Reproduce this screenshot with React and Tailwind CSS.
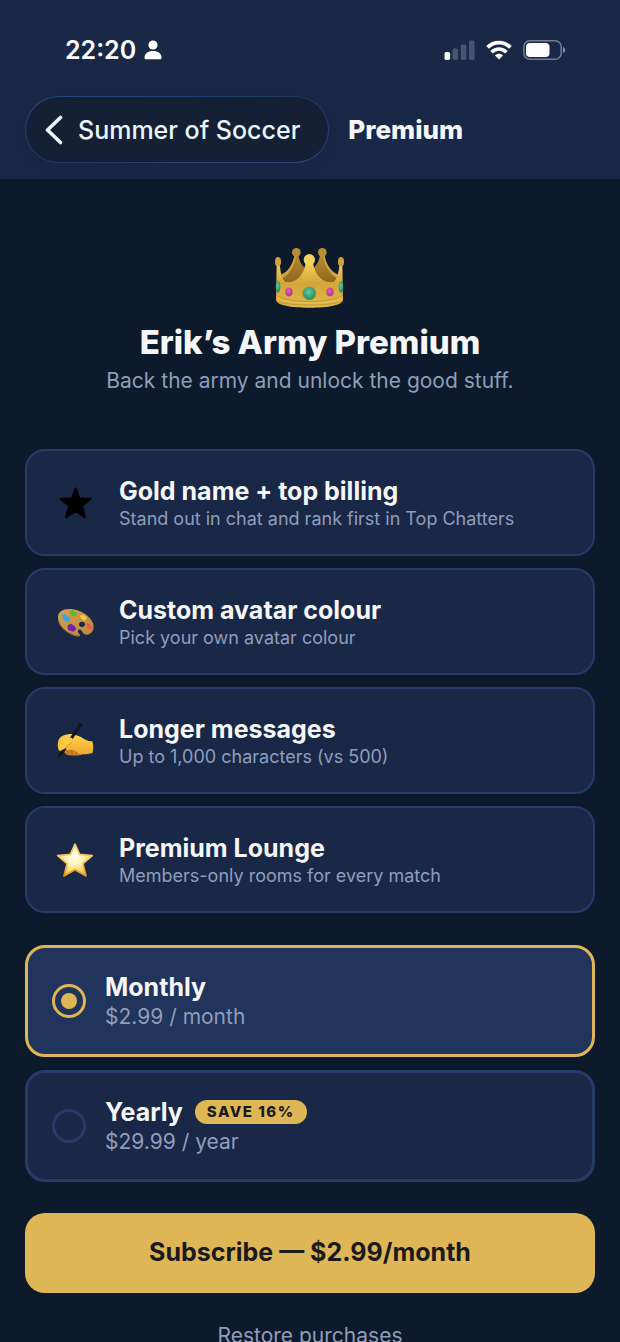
import React, { useState } from 'react';

function CrownIcon() {
  return (
    <svg viewBox="45 35 210 186" className="w-[70px] h-[62px]" aria-hidden="true">
      <defs>
        <linearGradient id="crownFront" x1="0" y1="0" x2="0" y2="1">
          <stop offset="0" stopColor="#f3cf58" />
          <stop offset="0.45" stopColor="#d3a63a" />
          <stop offset="1" stopColor="#dfb94c" />
        </linearGradient>
        <linearGradient id="crownBack" x1="0" y1="0" x2="0" y2="1">
          <stop offset="0" stopColor="#b98b32" />
          <stop offset="1" stopColor="#8b601d" />
        </linearGradient>
        <radialGradient id="crownGreen" cx="0.45" cy="0.4" r="0.6">
          <stop offset="0" stopColor="#63cfa0" />
          <stop offset="1" stopColor="#23835f" />
        </radialGradient>
        <radialGradient id="crownPink" cx="0.45" cy="0.4" r="0.6">
          <stop offset="0" stopColor="#e75fc8" />
          <stop offset="1" stopColor="#a92c92" />
        </radialGradient>
      </defs>
      <path d="M62 118 C84 112 97 88 104 60 L115 60 C119 80 125 90 136 98 L160 98 C170 90 176 80 180 60 L193 60 C198 88 214 112 235 118 L222 152 L75 152 Z" fill="url(#crownBack)" />
      <path d="M63 118 C84 112 98 88 104 60 L109 60 C104 92 88 118 68 128 Z M235 118 C214 112 199 88 193 60 L188 60 C194 92 210 118 230 128 Z" fill="#cfa43e" />
      <circle cx="109" cy="51" r="13" fill="#b98d35" />
      <circle cx="187" cy="51" r="13" fill="#b98d35" />
      <path d="M50 86 L59 86 C62 110 65 134 78 141 C104 148 132 122 137 84 L159 84 C164 122 193 148 219 141 C232 134 236 110 239 86 L247 86 L249 194 C246 210 205 217 149 217 C92 217 51 210 48 194 Z" fill="url(#crownFront)" />
      <path d="M78 141 C104 148 132 122 137 88 M219 141 C193 148 164 122 159 88" fill="none" stroke="#e6c055" strokeWidth="2" />
      <path d="M49 179 C70 205 228 205 248 179" fill="none" stroke="#b58430" strokeWidth="2" />
      <path d="M50 184 C71 209 227 209 247 184" fill="none" stroke="#ecce66" strokeWidth="2" />
      <path d="M49 196 C65 213 231 213 248 196" fill="none" stroke="#b88a31" strokeWidth="2" />
      <ellipse cx="54" cy="79" rx="9" ry="14" fill="#cfa13d" />
      <ellipse cx="243" cy="79" rx="9" ry="14" fill="#cfa13d" />
      <circle cx="148" cy="73" r="17" fill="#f4d35c" />
      <ellipse cx="54" cy="154" rx="7" ry="18" fill="url(#crownGreen)" />
      <ellipse cx="243" cy="154" rx="7" ry="18" fill="url(#crownGreen)" />
      <ellipse cx="87" cy="170" rx="11" ry="13" fill="url(#crownPink)" stroke="#c5912e" strokeWidth="2" />
      <ellipse cx="210" cy="170" rx="11" ry="13" fill="url(#crownPink)" stroke="#c5912e" strokeWidth="2" />
      <circle cx="148" cy="174" r="20" fill="url(#crownGreen)" stroke="#c5912e" strokeWidth="2" />
    </svg>
  );
}

function BlackStarIcon() {
  return (
    <svg viewBox="93 123 144 126" className="w-12 h-[42px]" aria-hidden="true">
      <path
        d="M167 143 L178 173 L211 174 L186 194 L194 228 L167 209 L139 228 L148 194 L122 174 L156 173 Z"
        fill="#000"
        stroke="#000"
        strokeWidth="7"
        strokeLinejoin="round"
      />
    </svg>
  );
}

function PaletteIcon() {
  return (
    <svg viewBox="33 33 144 126" className="w-12 h-[42px]" aria-hidden="true">
      <defs>
        <linearGradient id="wood" x1="0" y1="0" x2="1" y2="1">
          <stop offset="0" stopColor="#d6a04b" />
          <stop offset="1" stopColor="#bd8740" />
        </linearGradient>
      </defs>
      <path
        fillRule="evenodd"
        d="M54 84 C52 64 72 55 93 57 C122 60 153 77 160 103 C163 120 156 131 144 134 C136 136 129 130 125 123 C121 116 111 118 114 126 C116 132 124 135 119 138 C110 142 88 133 73 119 C61 108 55 97 54 84 Z M126 95 a9 8 0 1 0 0.1 0 Z"
        fill="url(#wood)"
      />
      <path d="M56 96 C62 116 95 139 119 138" fill="none" stroke="#8d5f2a" strokeWidth="3" />
      <path d="M89 66 L96 60 L102 66 L110 69 L106 77 L96 77 Z" fill="#57b934" stroke="#57b934" strokeWidth="3" strokeLinejoin="round" />
      <path d="M66 75 L74 73 L81 81 L90 84 L85 93 L73 92 Z" fill="#3da4de" stroke="#3da4de" strokeWidth="3" strokeLinejoin="round" />
      <path d="M120 77 L130 76 L139 83 L136 91 L126 87 Z" fill="#f4cf3e" stroke="#f4cf3e" strokeWidth="2" strokeLinejoin="round" />
      <path d="M140 100 L149 103 L158 115 L150 119 L144 112 Z" fill="#e65e4c" stroke="#e65e4c" strokeWidth="2" strokeLinejoin="round" />
      <path d="M84 107 L92 103 L101 107 L108 117 L100 124 L85 119 Z" fill="#7421ab" stroke="#7421ab" strokeWidth="3" strokeLinejoin="round" />
    </svg>
  );
}

function WritingHandIcon() {
  return (
    <svg viewBox="33 30 144 126" className="w-12 h-[42px]" aria-hidden="true">
      <defs>
        <linearGradient id="skin" x1="0" y1="0" x2="0" y2="1">
          <stop offset="0" stopColor="#ffd34b" />
          <stop offset="1" stopColor="#f0a930" />
        </linearGradient>
      </defs>
      <path d="M68 112 C70 128 78 137 92 136 C108 138 126 136 134 129 L120 106 Z" fill="#cf8127" />
      <path d="M80 120 L84 133 M94 122 L98 134 M108 124 L111 134" fill="none" stroke="#a55f19" strokeWidth="2" strokeLinecap="round" />
      <path d="M55 118 C52 104 53 90 60 83 C68 75 84 71 98 72 C106 76 116 76 124 82 C134 89 145 95 157 94 C161 106 161 120 157 130 C143 132 128 135 116 131 C108 122 98 118 86 120 C74 121 66 120 60 124 Z" fill="url(#skin)" />
      <path d="M121 44 L92 88" stroke="#11151c" strokeWidth="9" strokeLinecap="round" />
      <path d="M117 42 L126 48" stroke="#11151c" strokeWidth="5" strokeLinecap="round" />
      <path d="M76 114 L66 128" stroke="#11151c" strokeWidth="9" />
      <path d="M61 124 L71 131 L52 144 Z" fill="#11151c" />
      <path d="M56 118 C58 102 68 88 84 83 C96 80 102 88 97 96 C90 104 80 106 74 116 C70 119 62 121 56 118 Z" fill="#fdcb43" />
      <path d="M97 96 C90 104 80 106 74 116" fill="none" stroke="#d98c25" strokeWidth="3" strokeLinecap="round" />
    </svg>
  );
}

function GoldStarIcon() {
  return (
    <svg viewBox="33 27 144 126" className="w-12 h-[42px]" aria-hidden="true">
      <defs>
        <linearGradient id="starEdge" x1="0" y1="0" x2="0" y2="1">
          <stop offset="0" stopColor="#f2c66b" />
          <stop offset="0.5" stopColor="#f3c453" />
          <stop offset="1" stopColor="#dc9422" />
        </linearGradient>
        <radialGradient id="starFill" cx="0.48" cy="0.38" r="0.62">
          <stop offset="0" stopColor="#fffef0" />
          <stop offset="0.4" stopColor="#fff5bd" />
          <stop offset="1" stopColor="#f5c13e" />
        </radialGradient>
      </defs>
      <path
        d="M105 42 L119 73 L157 77 L129 101 L138 138 L105 119 L72 138 L81 101 L53 77 L91 73 Z"
        fill="url(#starFill)"
        stroke="url(#starEdge)"
        strokeWidth="5"
        strokeLinejoin="round"
      />
    </svg>
  );
}

const perks = [
  { icon: <BlackStarIcon />, title: 'Gold name + top billing', text: 'Stand out in chat and rank first in Top Chatters' },
  { icon: <PaletteIcon />, title: 'Custom avatar colour', text: 'Pick your own avatar colour' },
  { icon: <WritingHandIcon />, title: 'Longer messages', text: 'Up to 1,000 characters (vs 500)' },
  { icon: <GoldStarIcon />, title: 'Premium Lounge', text: 'Members-only rooms for every match' },
];

const plans = [
  { id: 'monthly', name: 'Monthly', price: '$2.99', unit: 'month' },
  { id: 'yearly', name: 'Yearly', price: '$29.99', unit: 'year', badge: 'SAVE 16%' },
];

function StatusBar() {
  return (
    <div className="flex items-center justify-between pl-[65px] pr-[54px] text-white">
      <div className="flex items-center gap-2">
        <span className="text-[25px] leading-8 font-semibold">22:20</span>
        <svg viewBox="0 0 18 20" className="w-[18px] h-5" fill="currentColor" aria-hidden="true">
          <circle cx="9" cy="5" r="4.6" />
          <path d="M0.5 17.5 C0.5 13.5 4 11 9 11 C14 11 17.5 13.5 17.5 17.5 C17.5 18.8 17 19.3 16 19.3 H2 C1 19.3 0.5 18.8 0.5 17.5 Z" />
        </svg>
      </div>
      <div className="flex items-center gap-[11px]">
        <svg viewBox="0 0 31 20" className="w-[31px] h-5" fill="currentColor" aria-hidden="true">
          <rect x="0.5" y="12" width="5.6" height="8" rx="1.8" />
          <g opacity="0.2">
            <rect x="8.5" y="8.5" width="5.6" height="11.5" rx="1.8" />
            <rect x="16.8" y="4.5" width="5.6" height="15.5" rx="1.8" />
            <rect x="25" y="0.5" width="5.6" height="19.5" rx="1.8" />
          </g>
        </svg>
        <svg viewBox="0 0 26 20" className="w-[26px] h-5" fill="none" stroke="currentColor" aria-hidden="true">
          <path d="M1.6 7.4 C8 0.9 18 0.9 24.4 7.4" strokeWidth="3.8" />
          <path d="M5.6 12.2 C10 8 16 8 20.4 12.2" strokeWidth="3.6" />
          <path d="M9 15.4 C11.2 13.2 14.8 13.2 17 15.4 L13 19.6 Z" fill="currentColor" stroke="none" />
        </svg>
        <svg viewBox="0 0 43 20" className="w-[43px] h-5" aria-hidden="true">
          <rect x="0.8" y="0.8" width="37.4" height="18.4" rx="6" fill="none" stroke="#fff" strokeOpacity="0.4" strokeWidth="1.5" />
          <rect x="3" y="3" width="23.5" height="14" rx="4" fill="#fff" />
          <path d="M40 7 C43 8 43 12 40 13 Z" fill="#fff" fillOpacity="0.45" />
        </svg>
      </div>
    </div>
  );
}

export default function App() {
  const [selected, setSelected] = useState('monthly');
  const plan = plans.find((p) => p.id === selected);

  return (
    <div className="flex h-screen flex-col bg-[#0d1a2c] font-['Inter','Liberation_Sans',sans-serif] text-[#f5f7fc]">
      <header className="bg-[#1a2848] pt-[34px] pb-4">
        <StatusBar />
        <nav className="mt-[30px] flex items-center gap-[19px] px-[25px]">
          {/* thin gradient ring around the back pill */}
          <div className="rounded-full bg-linear-to-br from-[#2d4a85] via-[#20345f] to-[#2d4a85] p-px shadow-[0_6px_20px_rgba(13,26,44,0.25)]">
            <button type="button" className="flex h-[65px] items-center gap-[15px] rounded-full bg-[#152035] pl-[19px] pr-7 text-[#e9f6ff]">
              <svg viewBox="0 0 18 30" className="w-[18px] h-[30px]" fill="none" stroke="currentColor" strokeWidth="3.6" strokeLinecap="round" strokeLinejoin="round" aria-hidden="true">
                <path d="M15.5 2.5 L2.5 15 L15.5 27.5" />
              </svg>
              <span className="text-[25px] leading-8 font-medium">Summer of Soccer</span>
            </button>
          </div>
          <h1 className="text-[26px] leading-8 font-extrabold">Premium</h1>
        </nav>
      </header>

      <main className="flex-1 overflow-y-auto px-[25px] pt-[68px] [scrollbar-width:none]">
        <section className="flex flex-col items-center text-center">
          <CrownIcon />
          <h2 className="mt-[13px] text-[33px] leading-10 font-extrabold">Erik’s Army Premium</h2>
          <p className="mt-[3px] text-[21px] leading-8 text-[#8f9dbb]">Back the army and unlock the good stuff.</p>
        </section>

        <ul className="mt-[52px] flex flex-col gap-3">
          {perks.map((perk) => (
            <li key={perk.title} className="flex items-center gap-5 rounded-[20px] border-2 border-[#253b68] bg-[#1a2848] px-6 py-6">
              {perk.icon}
              <div>
                <h3 className="text-[25px] leading-8 font-bold">{perk.title}</h3>
                <p className="mt-px text-lg leading-[22px] text-[#8f9dbb]">{perk.text}</p>
              </div>
            </li>
          ))}
        </ul>

        <div className="mt-8 flex flex-col gap-[13px]" role="radiogroup" aria-label="Plan">
          {plans.map((p) => (
            <label
              key={p.id}
              htmlFor={p.id}
              className={`flex cursor-pointer items-center gap-[19px] rounded-[20px] border-3 px-6 py-6 ${
                selected === p.id ? 'border-[#dfb656] bg-[#21345b]' : 'border-[#253b68] bg-[#1a2848]'
              }`}
            >
              <input
                id={p.id}
                type="radio"
                name="plan"
                checked={selected === p.id}
                onChange={() => setSelected(p.id)}
                className="flex size-[34px] shrink-0 appearance-none items-center justify-center rounded-full border-3 border-[#253b68] before:size-4 before:rounded-full checked:border-[#dfb656] checked:before:bg-[#dfb656]"
              />
              <span className="flex flex-col">
                <span className="flex items-center gap-3">
                  <span className="text-[25px] leading-[30px] font-bold">{p.name}</span>
                  {p.badge && (
                    <span className="rounded-full bg-[#dfb656] px-3 text-[15px] leading-6 font-extrabold tracking-widest text-[#1a1a1a]">{p.badge}</span>
                  )}
                </span>
                <span className="mt-0.5 text-[21px] leading-[26px] text-[#8f9dbb]">{p.price} / {p.unit}</span>
              </span>
            </label>
          ))}
        </div>

        <button type="button" className="mt-[31px] h-20 w-full rounded-[20px] bg-[#dfb656] text-[25px] font-bold text-[#1a1a1a]">
          Subscribe — {plan.price}/{plan.unit}
        </button>
        <button type="button" className="mt-[27px] mb-10 block w-full text-center text-[21px] leading-8 text-[#8f9dbb]">
          Restore purchases
        </button>
      </main>
    </div>
  );
}
